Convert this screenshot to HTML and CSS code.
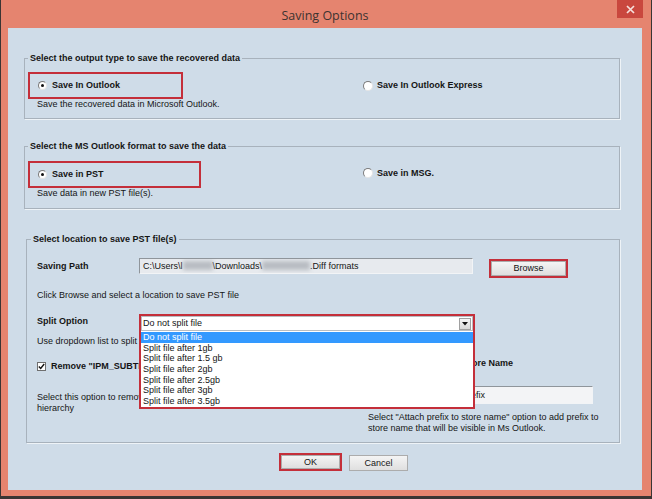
FILE: index.html
```html
<!DOCTYPE html>
<html>
<head>
<meta charset="utf-8">
<title>Saving Options</title>
<link rel="stylesheet" href="styles.css">
</head>
<body>
<div class="window">
  <div class="titlebar">
    <span class="title">Saving Options</span>
    <div class="close">
      <svg width="9" height="9" viewBox="0 0 9 9"><path d="M1 1L8 8M8 1L1 8" stroke="#f6e0dc" stroke-width="1.7" fill="none"/></svg>
    </div>
  </div>
  <div class="content">
    <fieldset class="group g1">
      <legend>Select the output type to save the recovered data</legend>
      <div class="opt-grid">
        <div class="opt-left">
          <div class="hl radio-box w1"><span class="radio on"></span><b>Save In Outlook</b></div>
          <div class="desc">Save the recovered data in Microsoft Outlook.</div>
        </div>
        <div class="opt-right"><span class="radio"></span><b>Save In Outlook Express</b></div>
      </div>
    </fieldset>

    <fieldset class="group g2">
      <legend>Select the MS Outlook format to save the data</legend>
      <div class="opt-grid">
        <div class="opt-left">
          <div class="hl radio-box w2"><span class="radio on"></span><b>Save in PST</b></div>
          <div class="desc">Save data in new PST file(s).</div>
        </div>
        <div class="opt-right up"><span class="radio"></span><b>Save in MSG.</b></div>
      </div>
    </fieldset>

    <fieldset class="group g3">
      <legend>Select location to save PST file(s)</legend>
      <div class="path-row">
        <b class="field-label">Saving Path</b>
        <div class="textbox path">C:\Users\l<span class="blur b1"></span>\Downloads\<span class="blur b2"></span>.Diff formats</div>
        <div class="hl btn-hl"><button class="btn browse">Browse</button></div>
      </div>
      <p class="hint h1">Click Browse and select a location to save PST file</p>
      <div class="split-row">
        <b class="field-label split-label">Split Option</b>
        <div class="combo-wrap">
          <div class="combo">
            <span class="combo-text">Do not split file</span>
            <span class="arrow"><svg width="6" height="4" viewBox="0 0 6 4"><path d="M0 0H6L3 3.5Z" fill="#111"/></svg></span>
          </div>
          <ul class="list">
            <li class="sel">Do not split file</li>
            <li>Split file after 1gb</li>
            <li>Split file after 1.5 gb</li>
            <li>Split file after 2gb</li>
            <li>Split file after 2.5gb</li>
            <li>Split file after 3gb</li>
            <li>Split file after 3.5gb</li>
          </ul>
        </div>
      </div>
      <p class="hint h2">Use dropdown list to split (PST) file into smaller parts</p>
      <div class="opts">
        <div class="check-row">
          <span class="checkbox"><svg width="7" height="7" viewBox="0 0 7 7"><path d="M0.8 3.4L2.7 5.4L6.2 1" stroke="#111" stroke-width="1.4" fill="none"/></svg></span>
          <b>Remove "IPM_SUBTREE" Folder</b>
        </div>
        <div class="check-row right-check">
          <span class="checkbox"></span>
          <b>Attach Prefix to Store Name</b>
        </div>
        <p class="left-desc">Select this option to remove "IPM_SUBTREE" folder from the<br>hierarchy</p>
        <div class="right-col">
          <div class="textbox prefix">Prefix</div>
          <p class="right-desc">Select "Attach prefix to store name" option to add prefix to<br>store name that will be visible in Ms Outlook.</p>
        </div>
      </div>
    </fieldset>

    <div class="footer">
      <div class="hl ok-hl"><button class="btn ok">OK</button></div>
      <button class="btn cancel">Cancel</button>
    </div>
  </div>
</div>
</body>
</html>
```

FILE: styles.css
```css
* { box-sizing: border-box; }
html, body { margin: 0; padding: 0; }
body {
  width: 652px;
  height: 499px;
  overflow: hidden;
  background: #3a3534;
  font-family: "Liberation Sans", Arial, sans-serif;
  font-size: 9px;
  line-height: 11px;
  color: #151515;
}
b { font-weight: bold; }
p { margin: 0; }

.window {
  position: relative;
  margin-left: 1px;
  width: 650px;
  height: 496px;
  background: #e5846f;
  display: flex;
  flex-direction: column;
  padding: 0 9px 6px 7px;
}
.titlebar {
  flex: none;
  height: 28px;
  display: flex;
  align-items: center;
  justify-content: center;
}
.title {
  font-family: "Open Sans", "Noto Sans", sans-serif;
  font-size: 12.5px;
  color: #3d3331;
  margin-top: 3px;
}
.close {
  position: absolute;
  top: 0;
  right: 8px;
  width: 26px;
  height: 18px;
  background: #c9473e;
  display: flex;
  align-items: center;
  justify-content: center;
}
.close svg { display: block; }

.content {
  flex: 1;
  background: #cfdce8;
  padding: 25px 22px 0 16px;
  display: flex;
  flex-direction: column;
}

.group {
  margin: 0;
  min-width: 0;
  border: 1px solid #a8b2bc;
  box-shadow: 1px 1px 0 #eef3f7;
  padding: 8px 0 8px 3px;
}
.group legend {
  padding: 0 2px;
  margin-left: 0;
  font-weight: bold;
  line-height: 11px;
}
.g2 { margin-top: 22px; padding: 9px 0 9px 3px; }
.g3 { margin: 25px 0 0 2px; padding: 13px 0 9px 10px; }
.g3 legend { margin-left: -6px; }

.hl { border: 2px solid #c42f3a; }

.opt-grid {
  display: grid;
  grid-template-columns: 335px 1fr;
}
.radio-box {
  height: 27px;
  display: flex;
  align-items: center;
  padding-left: 8px;
  gap: 5px;
}
.w1 { width: 155px; }
.w2 { width: 173px; }
.desc { margin-left: 9px; height: 11px; }
.opt-right {
  height: 27px;
  display: flex;
  align-items: center;
  gap: 4px;
}
.opt-right.up { height: 24px; }

.radio {
  position: relative;
  flex: none;
  width: 9px;
  height: 9px;
  border-radius: 50%;
  background: #fff;
  border: 1px solid;
  border-color: #7a7a7a #e4e4e4 #e4e4e4 #7a7a7a;
}
.opt-right .radio { width: 10px; height: 10px; }
.radio.on::after {
  content: "";
  position: absolute;
  left: 2px;
  top: 2px;
  width: 3px;
  height: 3px;
  border-radius: 50%;
  background: #111;
}

/* group 3 */
.path-row {
  display: flex;
  align-items: flex-start;
}
.field-label {
  width: 102px;
  flex: none;
  line-height: 16px;
}
.textbox {
  background: #e7eaee;
  border: 1px solid;
  border-color: #8f959b #f2f4f6 #f2f4f6 #8f959b;
  padding-left: 3px;
  white-space: nowrap;
  overflow: hidden;
}
.path {
  width: 334px;
  height: 16px;
  line-height: 14px;
}
.blur {
  display: inline-block;
  height: 9px;
  vertical-align: -1px;
  background: #a8adb3;
  filter: blur(2px);
  opacity: 0.75;
}
.b1 { width: 30px; }
.b2 { width: 48px; }
.btn-hl {
  margin: 1px 0 0 16px;
  width: 79px;
  height: 19px;
  display: flex;
  align-items: center;
  justify-content: center;
}
.btn {
  font-family: "Liberation Sans", Arial, sans-serif;
  font-size: 9px;
  line-height: 11px;
  color: #151515;
  padding: 0;
  margin: 0;
  background: linear-gradient(#f4f4f4, #dfdfdf);
  border: 1px solid #acacac;
  border-radius: 0;
}
.browse { width: 75px; height: 15px; }

.hint.h1 { margin-top: 12px; }
.split-row {
  margin-top: 13px;
  display: flex;
  align-items: flex-start;
}
.split-label { line-height: 15px; }
.combo-wrap {
  position: relative;
  width: 336px;
  border: 2px solid #c42f3a;
  border-bottom: none;
}
.combo {
  height: 15px;
  background: #fff;
  border: 1px solid #b9bdc2;
  display: flex;
  align-items: center;
  justify-content: space-between;
  padding: 0 1px 0 1px;
}
.arrow {
  width: 12px;
  height: 12px;
  background: linear-gradient(#f6f6f6, #d8d8d8);
  border: 1px solid #a0a0a0;
  display: flex;
  align-items: center;
  justify-content: center;
}
.arrow svg { display: block; }
.list {
  position: absolute;
  top: 100%;
  left: -2px;
  right: -2px;
  margin: 0;
  padding: 1px 0 0 0;
  list-style: none;
  background: #fff;
  border: 2px solid #c42f3a;
  border-top: none;
  z-index: 2;
}
.list li {
  height: 10.7px;
  line-height: 10.7px;
  padding-left: 2px;
  white-space: nowrap;
}
.list li.sel {
  background: #3399ff;
  color: #fff;
}
.hint.h2 { margin-top: 5px; white-space: nowrap; }

.opts {
  margin-top: 14px;
  display: grid;
  grid-template-columns: 331px 1fr;
  align-items: start;
}
.check-row {
  display: flex;
  align-items: center;
  gap: 5px;
  height: 11px;
  white-space: nowrap;
}
.right-check { padding-left: 12px; margin-top: -3px; }
.checkbox {
  flex: none;
  width: 9px;
  height: 9px;
  background: #fff;
  border: 1px solid #6f6f6f;
  display: flex;
  align-items: center;
  justify-content: center;
}
.checkbox svg { display: block; }
.left-desc {
  margin-top: 20px;
  line-height: 10.5px;
  white-space: nowrap;
}
.right-col { padding-top: 14px; }
.prefix {
  margin-left: 90px;
  width: 135px;
  height: 18px;
  line-height: 16px;
  background: #f3f4f6;
}
.right-desc {
  margin-top: 8px;
  line-height: 10.5px;
  white-space: nowrap;
}

.footer {
  margin-top: 10px;
  padding-left: 255px;
  display: flex;
  align-items: flex-start;
}
.ok-hl {
  width: 63px;
  height: 18px;
  display: flex;
  align-items: center;
  justify-content: center;
}
.ok { width: 59px; height: 14px; }
.cancel { margin: 2px 0 0 7px; width: 59px; height: 16px; }
```
